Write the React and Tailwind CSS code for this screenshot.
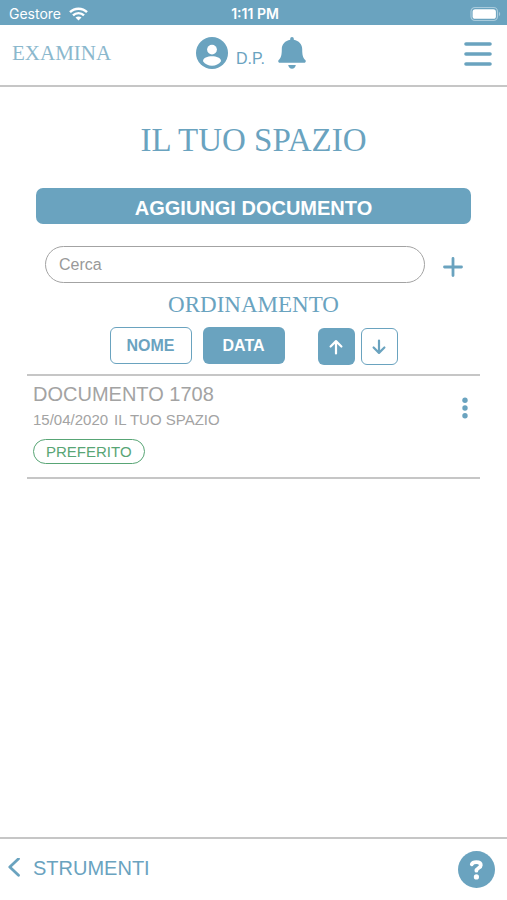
import React from "react";

function WifiIcon() {
  return (
    <svg className="h-[14px] w-[19px]" viewBox="0 0 19 14" fill="none" stroke="currentColor" strokeWidth="2.4" aria-hidden="true">
      <path d="M1 5.2C5.6.5 13.4.5 18 5.2" />
      <path d="M4 8.4c3-3 8-3 11 0" />
      <path d="M9.5 13.6 6.5 10.5c1.7-1.5 4.3-1.5 6 0z" fill="currentColor" stroke="none" />
    </svg>
  );
}

function BatteryIcon() {
  return (
    <svg className="h-4 w-[31px]" viewBox="0 0 31 16" aria-hidden="true">
      <rect x="1" y="1.5" width="26.5" height="13" rx="4" fill="none" stroke="#a9cbdc" strokeWidth="1.2" />
      <rect x="2.600" y="3.200" width="23.300" height="9.600" rx="2.600" fill="#fff" />
      <path d="M29 5.8c1.6.7 1.6 3.7 0 4.4z" fill="#a9cbdc" />
    </svg>
  );
}

function UserIcon() {
  return (
    <svg className="h-8 w-8" viewBox="0 0 32 32" aria-hidden="true">
      <circle cx="16" cy="16" r="16" fill="currentColor" />
      <circle cx="16" cy="12.6" r="4.9" fill="#fff" />
      <path d="M7 24.2c0-3.6 4.5-5 9-5s9 1.400 9 5c-2 2.800-5.300 4.600-9 4.600s-7-1.800-9-4.600z" fill="#fff" />
    </svg>
  );
}

function BellIcon() {
  return (
    <svg className="h-8 w-7" viewBox="0 0 28 32" fill="currentColor" aria-hidden="true">
      <path d="M12.200 1.800a1.800 1.800 0 0 1 3.600 0v.9c5 .9 8.400 4.500 8.400 9.200 0 6.200.8 8.900 3.100 11.200.9 1 .5 2.700-1.200 2.700H1.900c-1.700 0-2.100-1.700-1.200-2.700 2.300-2.300 3.100-5 3.100-11.200 0-4.700 3.400-8.300 8.400-9.200z" />
      <path d="M10.200 28h7.600c-.4 2.300-1.800 3.800-3.800 3.800s-3.400-1.500-3.800-3.800z" />
    </svg>
  );
}

function ArrowIcon({ down }) {
  return (
    <svg className="h-4 w-4" viewBox="0 0 16 16" fill="none" stroke="currentColor" strokeWidth="2.200" strokeLinecap="round" strokeLinejoin="round" aria-hidden="true">
      {down ? <path d="M8 1.500v12.300M2.600 8.500 8 13.900l5.400-5.400" /> : <path d="M8 14.500V2.200M2.600 7.500 8 2.100l5.400 5.400" />}
    </svg>
  );
}

function StatusBar() {
  return (
    <div className="grid h-[25px] grid-cols-3 items-center bg-[#6aa3bf] pt-[2px] pl-[9px] pr-[6px] font-[Inter,sans-serif] text-[14px] leading-5 text-white">
      <div className="flex items-center gap-2">
        <span>Gestore</span>
        <WifiIcon />
      </div>
      <span className="text-center text-[14px] font-semibold">1:11 PM</span>
      <div className="flex justify-end">
        <BatteryIcon />
      </div>
    </div>
  );
}

function Header() {
  return (
    <header className="grid h-[62px] grid-cols-[1fr_auto_1fr] items-center border-b-2 border-[#c6c6c6] pl-3 pr-[15px] pb-1">
      <span className="font-['Liberation_Serif',serif] text-[21px] leading-6 text-[#8bb8cd]">EXAMINA</span>
      <div className="flex items-center">
        <button type="button" aria-label="Profilo" className="flex items-center gap-2">
          <UserIcon />
          <span className="pt-3 text-[16px] leading-5">D.P.</span>
        </button>
        <button type="button" aria-label="Notifiche" className="ml-[13px] mr-[2px]">
          <BellIcon />
        </button>
      </div>
      <button type="button" aria-label="Menu" className="justify-self-end">
        <svg className="h-7 w-7" viewBox="0 0 28 28" stroke="currentColor" strokeWidth="3.600" strokeLinecap="round" aria-hidden="true">
          <path d="M2 5h24M2 15h24M2 25h24" />
        </svg>
      </button>
    </header>
  );
}

function DocumentRow() {
  return (
    <article className="flex justify-between border-y-2 border-[#c6c6c6] pl-[6px] pr-[7px] pt-[6px] pb-[13px] text-[#a3a3a3]">
      <div>
        <h3 className="text-[20px] leading-6">DOCUMENTO 1708</h3>
        <p className="mt-1 text-[15px] leading-5">
          <time dateTime="2020-04-15">15/04/2020</time>
          <span className="ml-[6px]">IL TUO SPAZIO</span>
        </p>
        <span className="mt-[9px] inline-flex h-[25px] items-center rounded-full border border-[#58a575] px-3 text-[15px] leading-5 text-[#58a575]">PREFERITO</span>
      </div>
      <button type="button" aria-label="Azioni" className="mt-[14px] self-start text-[#6aa3bf]">
        <svg className="h-6 w-4" viewBox="0 0 16 24" fill="currentColor" aria-hidden="true">
          <circle cx="8" cy="4.300" r="2.700" />
          <circle cx="8" cy="12" r="2.700" />
          <circle cx="8" cy="19.700" r="2.700" />
        </svg>
      </button>
    </article>
  );
}

export default function App() {
  return (
    <div className="flex min-h-screen flex-col bg-white font-['Liberation_Sans',Arial,sans-serif] text-[#6aa3bf]">
      <StatusBar />
      <Header />
      <main className="flex-1 px-[27px] pt-8">
        <h1 className="text-center font-['Liberation_Serif',serif] text-[33px] leading-[42px]">IL TUO SPAZIO</h1>
        <div className="mt-[27px] px-[9px]">
          <button type="button" className="h-9 w-full rounded-[7px] bg-[#6aa3bf] pt-1 text-[20px] leading-6 font-bold text-white">AGGIUNGI DOCUMENTO</button>
        </div>
        <div className="mt-[22px] flex items-center pl-[18px] pr-[17px]">
          <input type="search" aria-label="Cerca" placeholder="Cerca" className="h-[37px] min-w-0 flex-1 rounded-full border border-[#a3a3a3] px-[13px] text-[16px] leading-5 text-[#777] placeholder:text-[#999]" />
          <button type="button" aria-label="Aggiungi" className="ml-[18px] mt-1">
            <svg className="h-5 w-5" viewBox="0 0 20 20" stroke="currentColor" strokeWidth="2.800" strokeLinecap="round" aria-hidden="true">
              <path d="M10 1.500v17M1.500 10h17" />
            </svg>
          </button>
        </div>
        <section>
          <h2 className="mt-2 text-center font-['Liberation_Serif',serif] text-[23px] leading-7">ORDINAMENTO</h2>
          <div className="mt-2 flex justify-center">
            <button type="button" className="h-[37px] w-[82px] rounded-[6px] border border-[#6aa3bf] text-[16px] leading-5 font-bold">NOME</button>
            <button type="button" className="ml-[11px] h-[37px] w-[82px] rounded-[6px] bg-[#6aa3bf] text-[16px] leading-5 font-bold text-white">DATA</button>
            <button type="button" aria-label="Crescente" className="mt-[1px] ml-[33px] flex h-[37px] w-[37px] items-center justify-center rounded-[6px] bg-[#6aa3bf] text-white">
              <ArrowIcon />
            </button>
            <button type="button" aria-label="Decrescente" className="mt-[1px] ml-[6px] flex h-[37px] w-[37px] items-center justify-center rounded-[6px] border border-[#6aa3bf]">
              <ArrowIcon down />
            </button>
          </div>
        </section>
        <div className="mt-[9px]">
          <DocumentRow />
        </div>
      </main>
      <footer className="flex h-[63px] items-center justify-between border-t-2 border-[#c6c6c6] pl-2 pr-3">
        <a href="#strumenti" className="flex items-center gap-[13px] pb-1 text-[20px] leading-6">
          <svg className="h-5 w-3" viewBox="0 0 12 20" fill="none" stroke="currentColor" strokeWidth="2.800" strokeLinecap="round" strokeLinejoin="round" aria-hidden="true">
            <path d="M10.500 .8 1.800 9l8.700 8.200" />
          </svg>
          STRUMENTI
        </a>
        <button type="button" aria-label="Aiuto">
          <svg className="h-[37px] w-[37px]" viewBox="0 0 37 37" fill="none" aria-hidden="true">
            <circle cx="18.500" cy="18.500" r="18.500" fill="currentColor" />
            <path d="M13.800 13.200c.8-1.700 2.300-2 4.500-2 2.700 0 4.500 1.100 4.500 3.100 0 2.700-4.400 2.700-4.400 5.400" stroke="#fff" strokeWidth="3.800" strokeLinecap="round" strokeLinejoin="round" />
            <circle cx="18.400" cy="25.900" r="2.600" fill="#fff" />
          </svg>
        </button>
      </footer>
    </div>
  );
}
